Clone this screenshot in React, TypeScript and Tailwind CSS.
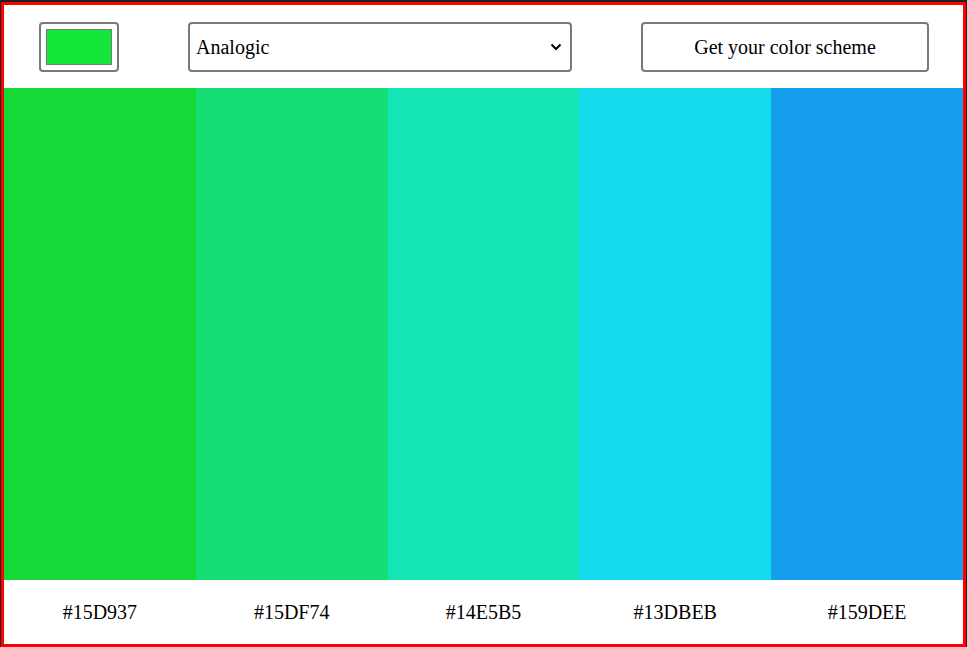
const SCHEME = ['#15D937', '#15DF74', '#14E5B5', '#13DBEB', '#159DEE']

export default function App() {
  return (
    <div className="h-[647px] w-[967px] bg-[#202020] pl-px pr-px pt-[2px] font-['Liberation_Serif',serif] text-[20px] text-black">
      <div className="flex h-[645px] flex-col border-[3px] border-[#ff0000] bg-white">
        {/* controls row */}
        <header className="flex h-[83px] shrink-0 items-center">
          <div className="ml-[35px] flex h-[50px] w-[80px] items-center justify-center rounded-[4px] border-2 border-[#7a7a7a] bg-white">
            <div className="h-[36px] w-[66px] border border-[#7a7a7a] bg-[#13e83a]" />
          </div>
          <div className="ml-[69px] flex h-[50px] w-[384px] items-center justify-between rounded-[4px] border-2 border-[#7a7a7a] pl-[6px] pr-[8px]">
            <span className="leading-none">Analogic</span>
            <svg width="12" height="8" viewBox="0 0 12 8" fill="none" stroke="#000" strokeWidth="2">
              <path d="M1.5 1.5 6 6l4.5-4.5" />
            </svg>
          </div>
          <button className="ml-[69px] flex h-[50px] w-[288px] items-center justify-center rounded-[4px] border-2 border-[#7a7a7a] bg-white leading-none">
            Get your color scheme
          </button>
        </header>

        {/* swatches */}
        <div className="flex min-h-0 flex-1">
          {SCHEME.map((c) => (
            <div key={c} className="flex flex-1 flex-col">
              <div className="flex-1" style={{ backgroundColor: c }} />
              <div className="flex h-[64px] items-center justify-center">{c}</div>
            </div>
          ))}
        </div>
      </div>
    </div>
  )
}
